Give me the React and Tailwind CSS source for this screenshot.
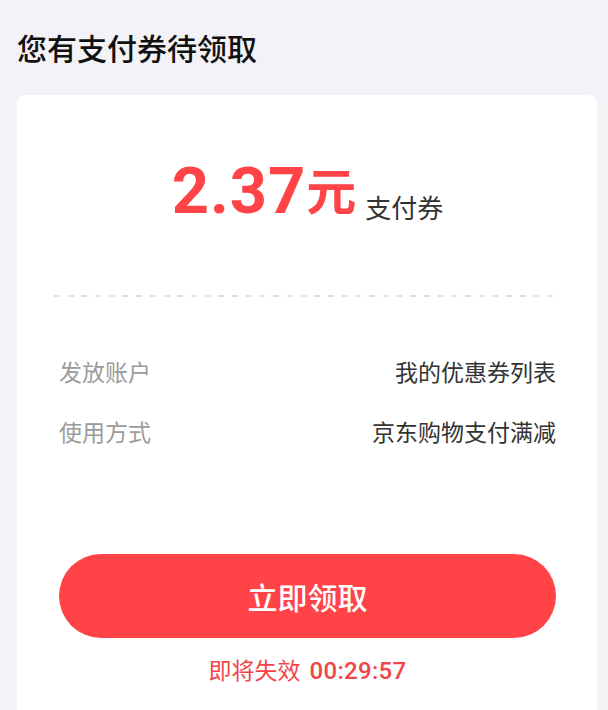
import React from "react";

const cjk = "font-['Noto_Sans_CJK_SC',sans-serif]";
const num = "font-['Roboto','Noto_Sans_CJK_SC',sans-serif]";

function Row({ label, value, className = "" }) {
  return (
    <div className={`flex items-center justify-between text-[23px] leading-none ${className}`}>
      <span className="text-[#9b9b9b]">{label}</span>
      <span className="text-[#333333]">{value}</span>
    </div>
  );
}

export default function App() {
  return (
    <div className={`min-h-[710px] w-[608px] overflow-hidden bg-[#f3f2f7] pl-[17px] ${cjk}`}>
      <h1 className="pt-[32px] text-[30px] leading-none font-medium text-[#111111]">
        您有支付券待领取
      </h1>
      <div className="mt-[33px] w-[580px] rounded-[8px] bg-white pl-[42px] pr-[41px] pt-[64px] pb-[60px]">
        <div className="flex items-baseline justify-center text-[#ff4346]">
          <span className={`${num} text-[65px] leading-none font-bold tracking-[1px]`}>2.37</span>
          <span className="text-[50px] leading-none font-bold -translate-y-[3px]">元</span>
          <span className="ml-[9px] text-[26px] leading-none text-[#333333] translate-y-[5px]">支付券</span>
        </div>
        <div className="-ml-[5px] mt-[71px] h-[2px] bg-[repeating-linear-gradient(90deg,#e2e2e2_0,#e2e2e2_6px,transparent_6px,transparent_13.7px)]" />
        <Row className="mt-[63px]" label="发放账户" value="我的优惠券列表" />
        <Row className="mt-[37px]" label="使用方式" value="京东购物支付满减" />
        <button className="mt-[111px] flex h-[84px] w-full items-center justify-center rounded-full bg-[#ff4346] text-[30px] leading-none font-medium text-white">
          立即领取
        </button>
        <div className="mt-[20px] flex items-baseline justify-center text-[#f2454a] leading-none">
          <span className="text-[23px]">即将失效</span>
          <span className={`${num} ml-[9px] text-[24px] font-medium tracking-[0.3px]`}>00:29:57</span>
        </div>
      </div>
    </div>
  );
}
